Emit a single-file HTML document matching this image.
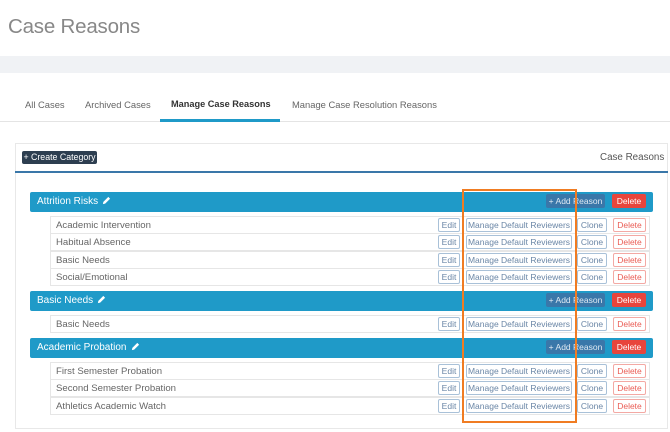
<!DOCTYPE html>
<html><head><meta charset="utf-8"><style>
*{box-sizing:border-box;margin:0;padding:0}
body{width:670px;height:432px;background:#fff;font-family:"Liberation Sans",sans-serif;position:relative;overflow:hidden;color:#555}
.a{position:absolute}
.title{left:8px;top:15px;font-size:20.5px;color:#888;font-weight:300;letter-spacing:-0.2px}
.band{left:0;top:56px;width:670px;height:17px;background:#f0f2f5}
.tab{top:99px;font-size:9.4px;color:#666}
.bar{left:30px;width:623px;height:20px;background:#1f9ac8;border-radius:2px;color:#fff;font-size:10px;line-height:20px;padding-left:7px}
.bar svg{vertical-align:-1px;margin-left:4px}
.row{left:50px;width:600px;height:18px;border:1px solid #e6e6e6;font-size:9.6px;line-height:17px;padding-left:5px;color:#666;background:#fff}
.btn{height:14px;border:1px solid #a9c1d8;border-radius:2px;font-size:8.5px;line-height:12px;text-align:center;color:#6a86a6;background:#fff}
.del{border-color:#f3a9a4;color:#ea5c54}
.add{height:14px;background:#3a77a9;color:#dfe9f2;font-size:8.5px;line-height:14px;text-align:center;border-radius:2px}
.bdel{height:14px;background:#e8453c;color:#fff;font-size:8.5px;line-height:14px;text-align:center;border-radius:2px}
</style></head><body>
<div class="a title">Case Reasons</div>
<div class="a band"></div>
<div class="a tab" style="left:25px">All Cases</div>
<div class="a tab" style="left:85px">Archived Cases</div>
<div class="a tab" style="left:171px;color:#333;font-weight:bold;font-size:9.2px">Manage Case Reasons</div>
<div class="a tab" style="left:292px">Manage Case Resolution Reasons</div>
<div class="a" style="left:0;top:121px;width:670px;height:1px;background:#e4e4e4"></div>
<div class="a" style="left:160px;top:119px;width:120px;height:3px;background:#1f9ac8"></div>
<div class="a" style="left:15px;top:143px;width:653px;height:286px;border:1px solid #e8e8e8"></div>
<div class="a" style="left:15px;top:171px;width:653px;height:2px;background:#3a77a9"></div>
<div class="a" style="left:22px;top:151px;width:75px;height:13px;background:#2d3e50;color:#fff;font-size:8.8px;line-height:13px;text-align:center;border-radius:2px">+ Create Category</div>
<div class="a" style="left:600px;top:152px;font-size:9.8px;color:#555">Case Reasons</div>
<div id="c"></div>
<script>
const pen='<svg width="9" height="9" viewBox="0 0 10 10"><path d="M1 9 L1.5 6.5 L7 1 L9 3 L3.5 8.5 Z" fill="#fff"/></svg>';
let h='';
function bar(y,t){h+=`<div class="a bar" style="top:${y}px">${t}${pen}</div><div class="a add" style="left:546px;top:${y+2}px;width:59px">+ Add Reason</div><div class="a bdel" style="left:612px;top:${y+2}px;width:34px">Delete</div>`;}
function row(y,t){h+=`<div class="a row" style="top:${y}px">${t}</div><div class="a btn" style="left:438px;top:${y+2}px;width:22px">Edit</div><div class="a btn" style="left:466px;top:${y+2}px;width:106px">Manage Default Reviewers</div><div class="a btn" style="left:577px;top:${y+2}px;width:30px">Clone</div><div class="a btn del" style="left:613px;top:${y+2}px;width:33px">Delete</div>`;}
bar(192,'Attrition Risks');
row(216,'Academic Intervention');row(233,'Habitual Absence');row(251,'Basic Needs');row(268,'Social/Emotional');
bar(291,'Basic Needs');row(315,'Basic Needs');
bar(338,'Academic Probation');
row(362,'First Semester Probation');row(379,'Second Semester Probation');row(397,'Athletics Academic Watch');
h+='<div class="a" style="left:462px;top:189px;width:115px;height:234px;border:2px solid #f07c22"></div>';
document.getElementById('c').innerHTML=h;
</script>
</body></html>
